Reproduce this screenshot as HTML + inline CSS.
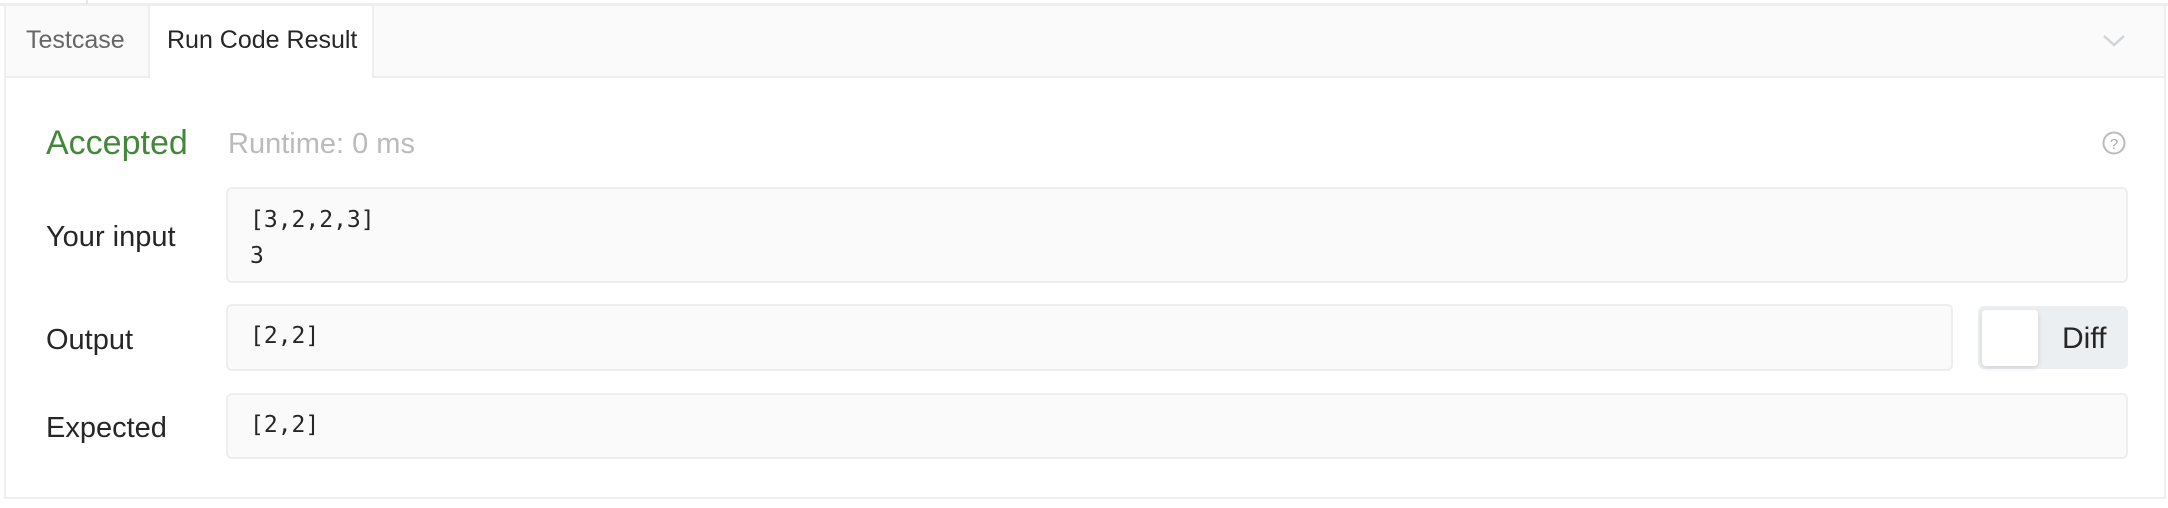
<!DOCTYPE html>
<html><head><style>
body{margin:0;width:2168px;height:508px;background:#fff;position:relative;overflow:hidden;font-family:"Liberation Sans",sans-serif;}
.a{position:absolute;}
.box{position:absolute;background:#fafafa;border:2px solid #eee;border-radius:6px;box-sizing:border-box;font-family:"DejaVu Sans Mono","Liberation Mono",monospace;font-size:23px;color:#262626;padding-left:22px;}
.lbl{position:absolute;left:46px;font-size:29px;color:#262626;}
</style></head><body>
<div class="a" style="left:0;top:3px;width:2168px;height:3px;background:#eee"></div>
<div class="a" style="left:86px;top:0;width:2px;height:4px;background:#e6e6e6"></div>
<div class="a" style="left:4px;top:5px;width:2162px;height:494px;border:2px solid #eee;border-top:none;box-sizing:border-box"></div>
<div class="a" style="left:6px;top:6px;width:2158px;height:70px;background:#fafafa;border-bottom:2px solid #eee"></div>
<div class="a" style="left:148px;top:6px;width:226px;height:72px;background:#fff;border-left:2px solid #eee;border-right:2px solid #eee;box-sizing:border-box"></div>
<div class="a" style="left:26px;top:26px;font-size:25px;color:#666">Testcase</div>
<div class="a" style="left:167px;top:26px;font-size:25px;color:#262626">Run Code Result</div>
<svg class="a" style="left:2102px;top:32px" width="24" height="18"><path d="M2 4 L12 13 L22 4" stroke="#d0d5da" stroke-width="2.5" fill="none"/></svg>
<div class="a" style="left:46px;top:124px;font-size:34px;color:#43883a">Accepted</div>
<div class="a" style="left:228px;top:128px;font-size:29px;color:#bbb">Runtime: 0 ms</div>
<svg class="a" style="left:2101px;top:130px" width="26" height="26"><circle cx="13" cy="13" r="10.5" stroke="#bbb" stroke-width="2" fill="none"/><text x="13" y="19" text-anchor="middle" font-size="15" fill="#aaa" font-family="Liberation Sans">?</text></svg>
<div class="lbl" style="top:221px">Your input</div>
<div class="box" style="left:226px;top:187px;width:1902px;height:96px;padding-top:13px;line-height:36px;">[3,2,2,3]<br>3</div>
<div class="lbl" style="top:324px">Output</div>
<div class="box" style="left:226px;top:304px;width:1727px;height:67px;line-height:60px;">[2,2]</div>
<div class="a" style="left:1978px;top:306px;width:150px;height:63px;background:#eceff2;border-radius:6px"></div>
<div class="a" style="left:1982px;top:310px;width:56px;height:56px;background:#fff;border-radius:4px;box-shadow:0 2px 6px rgba(0,0,0,.12)"></div>
<div class="a" style="left:2062px;top:322px;font-size:30px;color:#262626">Diff</div>
<div class="lbl" style="top:412px">Expected</div>
<div class="box" style="left:226px;top:393px;width:1902px;height:66px;line-height:60px;">[2,2]</div>
</body></html>
